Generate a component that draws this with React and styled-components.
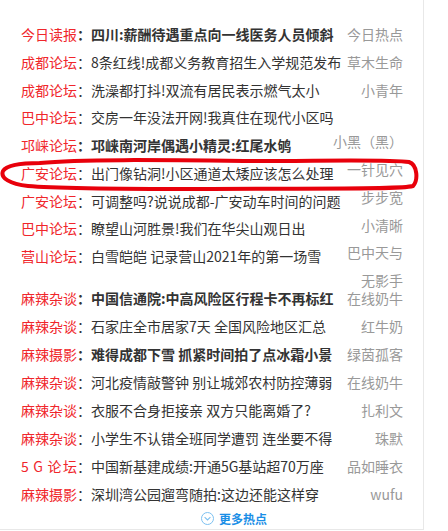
import React from 'react'
import styled, { createGlobalStyle } from 'styled-components'

const GlobalStyle = createGlobalStyle`
  body {
    margin: 0;
    background: #fff;
    font-family: "Microsoft YaHei", "Noto Sans CJK SC", sans-serif;
  }
`;

const Panel = styled.div`
  position: relative;
  box-sizing: border-box;
  width: 424px;
  height: 530px;
  padding: 21px 20px 0 21px;
  border-right: 1px solid #e8e8e8;
  border-bottom: 1px solid #e8e8e8;
`;

const Block = styled.div`
  display: flex;
  align-items: flex-start;
  margin-bottom: ${p => p.$after || 0}px;
`;

const TitleCol = styled.ul`
  flex: 1;
  min-width: 0;
  margin: 0;
  padding: 0;
  list-style: none;
`;

const Row = styled.li`
  display: flex;
  height: ${p => p.$pitch}px;
  line-height: ${p => p.$pitch}px;
  font-size: 14px;
  white-space: nowrap;
`;

const Label = styled.span`
  flex: none;
  width: 56px;
  color: #f0262b;
  text-align: justify;
  text-align-last: justify;
`;

const Title = styled.a`
  color: #333;
  font-weight: ${p => (p.$bold ? 700 : 400)};
  text-decoration: none;
`;

const AuthorCol = styled.ul`
  flex: none;
  margin: 0 0 ${p => p.$overflow || 0}px;
  padding: 0;
  list-style: none;
  text-align: right;
`;

const Author = styled.li`
  height: ${p => p.$pitch}px;
  line-height: ${p => p.$pitch}px;
  margin-top: ${p => p.$drop || 0}px;
  font-size: 14px;
  color: #999;
  white-space: nowrap;
`;

const MoreRow = styled.div`
  display: flex;
  align-items: center;
  justify-content: center;
  gap: 5px;
  height: 21px;
  padding-left: 44px;
  font-size: 12px;
  font-weight: 600;
  color: #1a8ee6;
`;

const Mark = styled.svg`
  position: absolute;
  top: 0;
  left: 0;
  pointer-events: none;
`;

const top = [
  { label: '今日读报', title: '四川:薪酬待遇重点向一线医务人员倾斜', bold: true },
  { label: '成都论坛', title: '8条红线!成都义务教育招生入学规范发布' },
  { label: '成都论坛', title: '洗澡都打抖!双流有居民表示燃气太小' },
  { label: '巴中论坛', title: '交房一年没法开网!我真住在现代小区吗' },
  { label: '邛崃论坛', title: '邛崃南河岸偶遇小精灵:红尾水鸲', bold: true },
  { label: '广安论坛', title: '出门像钻洞!小区通道太矮应该怎么处理' },
  { label: '广安论坛', title: '可调整吗?说说成都-广安动车时间的问题' },
  { label: '巴中论坛', title: '瞭望山河胜景!我们在华尖山观日出' },
  { label: '营山论坛', title: '白雪皑皑 记录营山2021年的第一场雪' },
];

const topAuthors = [
  { name: '今日热点' },
  { name: '草木生命' },
  { name: '小青年' },
  { name: '小黑（黑）', drop: 24 },
  { name: '一针见穴' },
  { name: '步步宽' },
  { name: '小清晰' },
  { name: '巴中天与' },
  { name: '无影手' },
];

const bottom = [
  { label: '麻辣杂谈', title: '中国信通院:中高风险区行程卡不再标红', bold: true, author: '在线奶牛' },
  { label: '麻辣杂谈', title: '石家庄全市居家7天 全国风险地区汇总', author: '红牛奶' },
  { label: '麻辣摄影', title: '难得成都下雪 抓紧时间拍了点冰霜小景', bold: true, author: '绿茵孤客' },
  { label: '麻辣杂谈', title: '河北疫情敲警钟 别让城郊农村防控薄弱', author: '在线奶牛' },
  { label: '麻辣杂谈', title: '衣服不合身拒接亲 双方只能离婚了?', author: '扎利文' },
  { label: '麻辣杂谈', title: '小学生不认错全班同学遭罚 连坐要不得', author: '珠默' },
  { label: '5 G 论坛', title: '中国新基建成绩:开通5G基站超70万座', author: '品如睡衣' },
  { label: '麻辣摄影', title: '深圳湾公园遛弯随拍:这边还能这样穿', author: 'wufu' },
];

const Titles = ({ items, pitch }) => (
  <TitleCol>
    {items.map((it, i) => (
      <Row key={i} $pitch={pitch}>
        <Label>{it.label}</Label>
        <Title href="#" $bold={it.bold}>：{it.title}</Title>
      </Row>
    ))}
  </TitleCol>
);

const App = () => (
  <>
    <GlobalStyle />
    <Panel>
      <Block $after={13}>
        <Titles items={top} pitch={27.75} />
        <AuthorCol $overflow={-24}>
          {topAuthors.map((a, i) => (
            <Author key={i} $pitch={27.75} $drop={a.drop}>{a.name}</Author>
          ))}
        </AuthorCol>
      </Block>

      <Block>
        <Titles items={bottom} pitch={28} />
        <AuthorCol>
          {bottom.map((it, i) => (
            <Author key={i} $pitch={28}>{it.author}</Author>
          ))}
        </AuthorCol>
      </Block>

      <MoreRow>
        <svg width="13" height="13" viewBox="0 0 13 13">
          <circle cx="6.5" cy="6.5" r="6" fill="none" stroke="#7cc0f0" strokeWidth="1" />
          <path d="M3.6 5.2 L6.5 8 L9.4 5.2" fill="none" stroke="#7cc0f0" strokeWidth="1.1" />
        </svg>
        更多热点
      </MoreRow>

      <Mark width="424" height="200" viewBox="0 0 424 200">
        <path
          d="M40 163 C80 159 160 160 250 161 C320 161 390 159 409 162 C418 165 418 181 413 186 C400 190 300 188 200 189 C130 189 60 189 28 186 C10 184 0 178 3 171 C6 166 16 163 40 163"
          fill="none"
          stroke="#e8000b"
          strokeWidth="4"
          strokeLinecap="round"
        />
      </Mark>
    </Panel>
  </>
);

export default App;
